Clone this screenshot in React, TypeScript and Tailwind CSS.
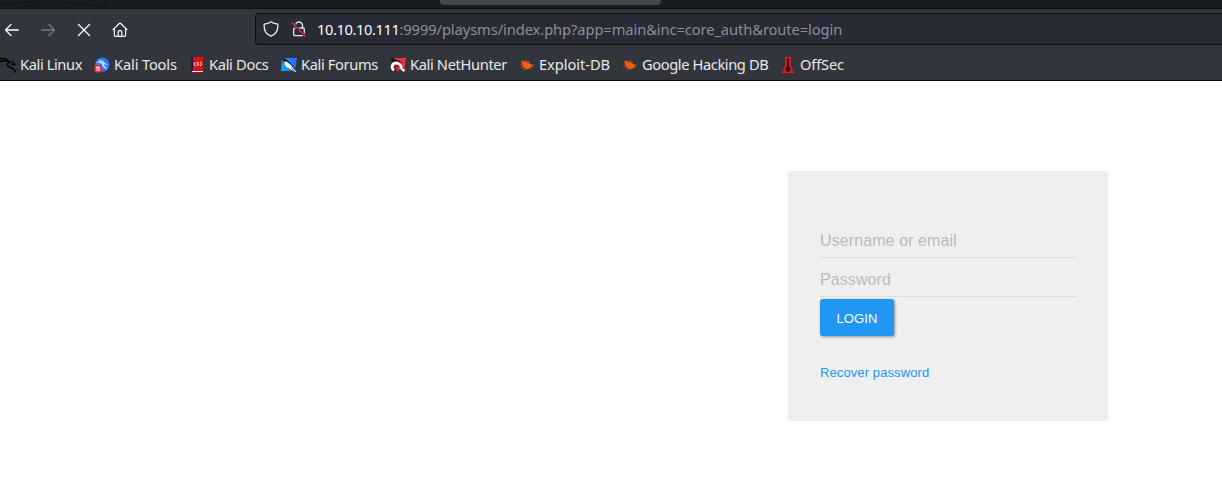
import React from "react";

const DragonIcon = () => (
  <svg width="16" height="16" viewBox="0 0 16 16" fill="none" stroke="#050505" strokeLinecap="round" strokeLinejoin="round">
    <path d="M0 1.2C3 .8 6 1.5 8.5 3.8M0 4.5C3 3.4 6 3.4 9 4.7L12 4.9L15 7.2L14.4 8.4L11.2 7.2" strokeWidth="1.4" />
    <path d="M9 5C6.5 7 7 9.7 9.6 10.3C12 10.7 14.5 11.8 15.3 15" strokeWidth="1.7" />
    <path d="M0 1.2L2.5 3" strokeWidth="1" />
  </svg>
);

const ToolsIcon = () => (
  <svg width="16" height="16" viewBox="0 0 16 16">
    <circle cx="8.3" cy="7.6" r="7.2" fill="#2777ff" />
    <path d="M2 5.8C5 3.8 8.5 4 10.5 5.5L14.6 8.3L10.5 7.2C9.2 8.2 11.5 9.6 13.8 12.3C10.5 11.3 8 10 8.2 7.5C6.5 5.8 4.5 5.5 2 5.8Z" fill="#c6dcff" />
    <path d="M4.5 3.2L10 4.2" stroke="#b5d4ff" strokeWidth=".8" />
    <circle cx="4" cy="11.8" r="4" fill="#ee2d36" />
    <path d="M2 10.2H6M3 10.2V14M5 10.2V14" stroke="#fff" strokeWidth="1" />
  </svg>
);

const DocsIcon = () => (
  <svg width="16" height="16" viewBox="0 0 16 16">
    <path d="M2 0H14V14H2Z" fill="#de1017" />
    <path d="M2 0H4V14H2Z" fill="#281645" />
    <path d="M3 14H14V15H3Z" fill="#eee" />
    <path d="M2 15H14V16H2Z" fill="#ae1016" />
    <path d="M6.8 5L4.9 7L6.8 9M11 5L12.9 7L11 9M10 5.8C7.5 5 7.5 6.5 9 7C10.5 7.5 9.5 8.8 7.8 8" fill="none" stroke="#fff" strokeWidth=".9" />
  </svg>
);

const ForumsIcon = () => (
  <svg width="16" height="16" viewBox="0 0 16 16">
    <defs>
      <linearGradient id="forum" x1="0" x2="1">
        <stop stopColor="#16a5ff" />
        <stop offset="1" stopColor="#276bff" />
      </linearGradient>
    </defs>
    <path d="M1 1H16L14 14H0Z" fill="url(#forum)" />
    <path d="M0 .5L5 2L10.5 7L15.5 14L14 15.5L8 12L3 7L0 1Z" fill="#111c30" />
    <path d="M0 1L3.5 5.3L4.8 4.2L7 5.5L10 8L13 12L15.5 15L13.8 14.7L9 12.3L5.5 10L3.5 7.5L3.2 5.8Z" fill="#f4f5f7" />
    <path d="M10.5 11L13 14" stroke="#17233c" strokeWidth=".6" />
  </svg>
);

const NetHunterIcon = () => (
  <svg width="16" height="16" viewBox="0 0 16 16">
    <path d="M4 1H16L14.5 12L9 13L2 9Z" fill="#f92e3c" />
    <path d="M0 0L6 2.5L10 4L12 7L8 5.5L3 6Z" fill="#18141a" />
    <path d="M4.2 13C.8 11.5 1.5 6 6.2 5.8C10.8 5.8 10.5 9.8 12 11.5L14.5 14" fill="none" stroke="#fff" strokeWidth="2.8" />
    <path d="M4.5 11.5C4.2 8.8 7.3 8 8.8 10" fill="none" stroke="#35101e" strokeWidth="1.2" />
    <path d="M5.8 12.5L8.8 14M12.8 10L15 12" fill="none" stroke="#c91c40" strokeWidth="1.8" />
  </svg>
);

const BugIcon = () => (
  <svg width="16" height="16" viewBox="0 0 16 16">
    <path d="M2.2 4C4 3.5 5 4.6 6 4.8C8 3.7 10.5 5.3 11.5 7.2C13 7.2 14 8.5 13.8 10L12.2 9.8C11.5 12 9 12.8 6.8 12C4 11 2.7 8.8 3.1 6.8Z" fill="#f2600c" />
    <path d="M.5 7L4 7.5M1.3 10.5L5 9.8M4 13L7 11M6.5 2.8L9 6M9.5 3.4L10.3 7M12 8L15.5 7.5M11.5 10L13.5 11.5" stroke="#a34d20" strokeWidth=".75" />
  </svg>
);

const OffSecIcon = () => (
  <svg width="16" height="16" viewBox="0 0 16 16">
    <path d="M5 0H11V9L14.5 16H1.5L5 9Z" fill="#df1e25" />
    <path d="M7 1.5H9V9.5L10.8 12L8.8 15H7.2L5.2 12L7 9.5Z" fill="#310b13" />
    <path d="M6 1V10L3.5 15M10 1V10L12.5 15" fill="none" stroke="#9c151c" strokeWidth=".6" />
  </svg>
);

const bookmarks = [
  { label: "Kali Linux", icon: <DragonIcon />, width: "w-[94px]", tracking: "tracking-[-0.4px]" },
  { label: "Kali Tools", icon: <ToolsIcon />, width: "w-[95px]", tracking: "tracking-[-0.15px]" },
  { label: "Kali Docs", icon: <DocsIcon />, width: "w-[92px]", tracking: "tracking-[-0.33px]" },
  { label: "Kali Forums", icon: <ForumsIcon />, width: "w-[109px]", tracking: "tracking-[-0.36px]" },
  { label: "Kali NetHunter", icon: <NetHunterIcon />, width: "w-[129px]", tracking: "tracking-[-0.36px]" },
  { label: "Exploit-DB", icon: <BugIcon />, width: "w-[103px]", tracking: "tracking-[-0.05px]" },
  { label: "Google Hacking DB", icon: <BugIcon />, width: "w-[158px]", tracking: "tracking-[-0.4px]" },
  { label: "OffSec", icon: <OffSecIcon />, width: "w-[80px]", tracking: "tracking-[-0.15px]" },
];

function Toolbar() {
  return (
    <div className="flex h-10 items-center">
      <div className="flex w-[255px] shrink-0 items-center gap-5 pl-1 pt-px text-[#fbfbfe]">
        <svg width="16" height="16" viewBox="0 0 16 16" fill="none" stroke="currentColor" strokeWidth="1.3" strokeLinecap="round" strokeLinejoin="round"><path d="M14.3 8H1.7M7 2.5L1.5 8L7 13.5" /></svg>
        <svg className="text-[#797a80]" width="16" height="16" viewBox="0 0 16 16" fill="none" stroke="currentColor" strokeWidth="1.3" strokeLinecap="round" strokeLinejoin="round"><path d="M1.7 8H14.3M9 2.5L14.5 8L9 13.5" /></svg>
        <svg width="16" height="16" viewBox="0 0 16 16" fill="none" stroke="currentColor" strokeWidth="1.3" strokeLinecap="round"><path d="M2.5 2.5L13.5 13.5M13.5 2.5L2.5 13.5" /></svg>
        <svg width="16" height="16" viewBox="0 0 16 16" fill="none" stroke="currentColor" strokeWidth="1.2" strokeLinecap="round" strokeLinejoin="round"><path d="M1 7.6L7.3 1.5Q8 .9 8.7 1.5L15 7.6M2.4 7V13.3Q2.4 14.4 3.5 14.4H12.5Q13.6 14.4 13.6 13.3V7M6.2 14V9.8Q6.2 8.7 7.2 8.7H8.8Q9.8 8.7 9.8 9.8V14" /></svg>
      </div>
      <div className="flex h-8 flex-1 items-center rounded-l border border-r-0 border-[#0d0e14] bg-[#282a36] pl-[7px]">
        <svg className="mr-3 shrink-0" width="16" height="16" viewBox="0 0 16 16" fill="none" stroke="#e8e8ed" strokeWidth="1.3" strokeLinejoin="round"><path d="M8 .8C6.5 2 4 3 1.2 3.2C.8 8 2.8 13.2 8 15.2C13.2 13.2 15.2 8 14.8 3.2C12 3 9.5 2 8 .8Z" /></svg>
        <svg className="mr-[10px] shrink-0" width="16" height="16" viewBox="0 0 16 16" fill="none"><path d="M4.5 6.5V4.5A3.5 3.5 0 0 1 11.5 4.5V6.5M4 7H12Q13.3 7 13.3 8.3V13.4Q13.3 14.7 12 14.7H4Q2.7 14.7 2.7 13.4V8.3Q2.7 7 4 7Z" stroke="#e8e8ed" strokeWidth="1.3" /><path d="M.8 1.5L14.2 15" stroke="#282a36" strokeWidth="3" /><path d="M.8 1.5L14.2 15" stroke="#e22850" strokeWidth="1.3" strokeLinecap="round" /></svg>
        <span className="whitespace-nowrap text-[14.67px] leading-5 tracking-[-0.07px] text-[#8e8f96]"><span className="tracking-[-0.4px] text-[#fbfbfe]">10.10.10.111</span>:9999/playsms/index.php?app=main&amp;inc=core_auth&amp;route=login</span>
      </div>
    </div>
  );
}

export default function App() {
  return (
    <main className="flex h-[478px] w-[1222px] flex-col overflow-hidden bg-white font-['Noto_Sans',sans-serif]">
      <header className="flex h-[81px] shrink-0 flex-col border-b border-[#07070d] bg-[#33353d]">
        <div className="relative flex h-[9px] shrink-0 border-b border-[#111217] bg-[#1a1b20] pl-[440px]">
          <svg className="absolute left-0 top-0" width="240" height="8" fill="none" stroke="#121317" strokeWidth="1.2"><path d="M0 5L31 2L39 8M17 8L30 5L34 8M36 0L42 8M58 2Q80 3 107 8" /></svg>
          <div className="h-[5px] w-[221px] rounded-b bg-[#44464e]" />
        </div>
        <Toolbar />
        <nav className="flex h-[31px] items-center">
          {bookmarks.map(({ label, icon, width, tracking }) => (
            <div key={label} className={`flex shrink-0 items-center gap-1 whitespace-nowrap text-[14.67px] leading-5 text-[#e9e9ed] ${width}`}>
              {icon}<span className={`pb-[2px] ${tracking}`}>{label}</span>
            </div>
          ))}
        </nav>
      </header>
      <section className="flex flex-1 justify-end pr-[114px] pt-[90px] font-['Liberation_Sans',sans-serif] tracking-[0.1px]">
        <form className="flex h-[250px] w-80 flex-col items-start rounded-[3px] bg-[#efefef] px-8 pt-[50px]" onSubmit={(e) => e.preventDefault()}>
          <input aria-label="Username or email" placeholder="Username or email" className="h-[37px] w-full border-b border-[#dddddd] pt-[3px] text-base tracking-[0.1px] outline-none placeholder:text-[#bbbbbb]" />
          <input aria-label="Password" type="password" placeholder="Password" className="mt-[2px] h-[37px] w-full border-b border-[#dddddd] pt-[3px] text-base tracking-[0.1px] outline-none placeholder:text-[#bbbbbb]" />
          <button className="mt-[2px] h-[37px] w-[74px] rounded-[3px] bg-[#2196f3] pt-[2px] text-[13px] tracking-[0.1px] text-white shadow-[1px_1px_3px_rgba(0,0,0,0.4)]">LOGIN</button>
          <a className="mt-[27px] text-[13px] leading-5 text-[#2196f3]">Recover password</a>
        </form>
      </section>
    </main>
  );
}
